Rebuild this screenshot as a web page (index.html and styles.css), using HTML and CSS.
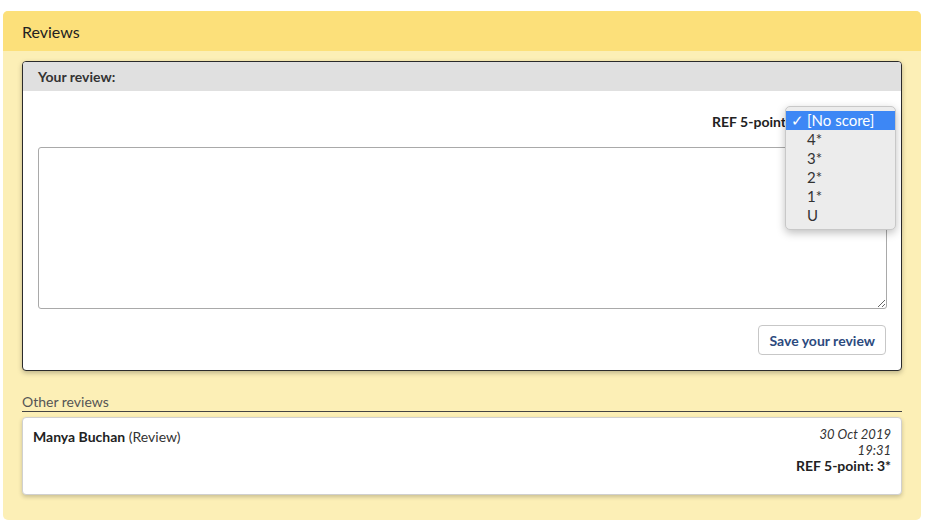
FILE: index.html
```html
<!DOCTYPE html>
<html>
<head>
<meta charset="utf-8">
<link rel="stylesheet" href="styles.css">
</head>
<body>
<div class="panel">
  <div class="panel-head">Reviews</div>
  <div class="panel-body">
    <div class="card">
      <div class="card-head">Your review:</div>
      <div class="card-body">
        <div class="score-row">
          <span class="score-label">REF 5-point</span>
          <div class="select-wrap">
            <div class="select-box"></div>
            <div class="menu">
              <div class="opt sel"><span class="chk">✓</span>[No score]</div>
              <div class="opt">4*</div>
              <div class="opt">3*</div>
              <div class="opt">2*</div>
              <div class="opt">1*</div>
              <div class="opt">U</div>
            </div>
          </div>
        </div>
        <textarea class="ta"></textarea>
        <div class="actions"><button class="btn">Save your review</button></div>
      </div>
    </div>
    <div class="other-title">Other reviews</div>
    <div class="review">
      <div class="who"><b>Manya Buchan</b> (Review)</div>
      <div class="meta">
        <div class="date">30 Oct 2019</div>
        <div class="date">19:31</div>
        <div class="score">REF 5-point: 3*</div>
      </div>
    </div>
  </div>
</div>
</body>
</html>
```
FILE: styles.css
```css
* { box-sizing: border-box; }
body { margin: 0; background: #fff; font-family: Lato, "Open Sans", sans-serif; color: #222; }
.panel { margin: 11px 7px 0 3px; border-radius: 5px; overflow: hidden; background: #fcefb6; height: 509px; }
.panel-head { background: #fce07a; height: 40px; padding: 0 0 0 19px; display: flex; align-items: center; font-size: 16px; color: #222; }
.panel-body { padding: 10px 19px 0 19px; }
.card { background: #fff; border: 1px solid #2b2b2b; border-radius: 4px; box-shadow: 0 2px 5px rgba(0,0,0,0.25); height: 310px; }
.card-head { background: #e0e0e0; height: 29px; padding: 0 15px; display: flex; align-items: center; font-size: 14px; font-weight: bold; color: #333; border-radius: 3px 3px 0 0; }
.card-body { padding: 17px 15px 0 15px; }
.score-row { display: flex; justify-content: flex-end; align-items: center; height: 26px; font-size: 14px; font-weight: bold; color: #222; }
.score-label { margin-right: 0; }
.select-wrap { position: relative; width: 100px; }
.select-box { border: 1px solid #bbb; border-radius: 4px; height: 22px; }
.menu { position: absolute; left: -1px; top: -4px; width: 111px; background: #ececec; border: 1px solid #c8c8c8; border-radius: 5px; box-shadow: 0 3px 8px rgba(0,0,0,0.25); padding: 4px 0 4px 0; font-size: 15px; font-weight: normal; color: #333; }
.opt { height: 19px; line-height: 19px; padding-left: 21px; position: relative; }
.opt.sel { background: #3d87f5; color: #fff; }
.chk { position: absolute; left: 5px; top: 0; }
.ta { display: block; width: 849px; height: 162px; margin-top: 13px; border: 1px solid #a9a9a9; border-radius: 3px; resize: vertical; }
.actions { display: flex; justify-content: flex-end; margin-top: 16px; }
.btn { font-family: Lato, "Open Sans", sans-serif; font-size: 14px; font-weight: bold; color: #2c4a7e; background: #fff; border: 1px solid #c7c7c7; border-radius: 4px; height: 30px; padding: 0 10px; }
.other-title { margin-top: 22px; font-size: 14px; color: #555; padding-bottom: 1px; border-bottom: 1px solid #444; }
.review { margin-top: 5px; background: #fff; border: 1px solid #d0d0d0; border-radius: 4px; box-shadow: 0 2px 4px rgba(0,0,0,0.2); height: 78px; padding: 10px 10px 0 10px; display: flex; justify-content: space-between; font-size: 14px; }
.who { color: #333; }
.who b { color: #222; }
.meta { text-align: right; font-size: 13px; line-height: 16px; margin-top: -2px; }
.date { font-style: italic; color: #333; }
.score { font-weight: bold; color: #222; font-size: 14px; }
```
